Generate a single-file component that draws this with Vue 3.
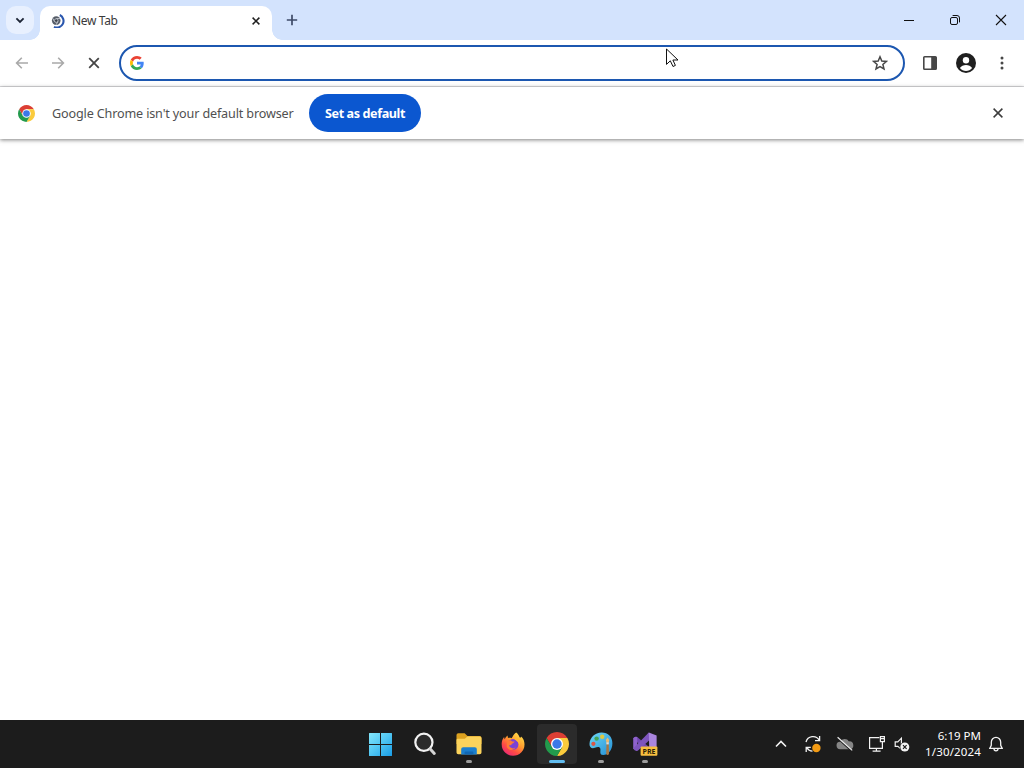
<template>
  <div class="desktop">
    <!-- shared chrome logo -->
    <svg class="defs" width="0" height="0">
      <symbol id="chrome-logo" viewBox="-22 -22 44 44">
        <path fill="#dc3f34" d="M-19.05 -11A22 22 0 0 1 19.05 -11L0 -11L-9.53 5.5Z" />
        <path fill="#fbcb3c" d="M19.05 -11A22 22 0 0 1 0 22L9.53 5.5L0 -11Z" />
        <path fill="#229a4c" d="M0 22A22 22 0 0 1 -19.05 -11L-9.53 5.5L9.53 5.5Z" />
        <circle r="11" fill="#fff" />
        <circle r="8.6" fill="#3b78e7" />
      </symbol>
    </svg>

    <!-- tab strip -->
    <header class="tabstrip">
      <button class="tab-search">
        <svg width="10" height="7" viewBox="0 0 10 7"><path d="M1.4 1.3L5 4.9L8.6 1.3" fill="none" stroke="#1c2434" stroke-width="1.8" /></svg>
      </button>
      <div class="tab">
        <svg class="favicon" width="14" height="14" viewBox="0 0 14 14">
          <circle cx="5.2" cy="6.6" r="4.3" fill="#565d68" />
          <path d="M5.2 4.6H9.1M3.5 7.5L1.6 4.2M6.9 7.5L5 10.9" stroke="#d5d9e0" stroke-width=".8" />
          <circle cx="5.2" cy="6.6" r="1.8" fill="#3c424c" stroke="#dde0e5" stroke-width=".7" />
          <path d="M8.8 1A6.2 6.2 0 0 1 3 12.9" fill="none" stroke="#2a57ae" stroke-width="2.1" />
        </svg>
        <span class="tab-title">New Tab</span>
        <svg class="tab-close" width="8" height="8" viewBox="0 0 8 8"><path d="M.6 .6L7.4 7.4M7.4 .6L.6 7.4" stroke="#1f1f1f" stroke-width="1.5" /></svg>
      </div>
      <button class="new-tab">
        <svg width="12" height="12" viewBox="0 0 12 12"><path d="M6 .8V11.2M.8 6H11.2" stroke="#3e4b68" stroke-width="1.7" /></svg>
      </button>
      <div class="window-buttons">
        <span class="win-btn"><svg width="10" height="10" viewBox="0 0 10 10"><path d="M0 5.5H10" stroke="#111" /></svg></span>
        <span class="win-btn">
          <svg width="10" height="10" viewBox="0 0 10 10" fill="none" stroke="#111">
            <rect x=".5" y="2.5" width="7" height="7" rx="1.5" />
            <path d="M2.6 .5H7Q9.5 .5 9.5 3V7.4" />
          </svg>
        </span>
        <span class="win-btn"><svg width="12" height="12" viewBox="0 0 12 12"><path d="M1 1L11 11M11 1L1 11" stroke="#111" stroke-width="1.1" /></svg></span>
      </div>
    </header>

    <!-- toolbar -->
    <nav class="toolbar">
      <span class="nav-btn">
        <svg width="14" height="12" viewBox="0 0 14 12" fill="none" stroke="#a9a9a9" stroke-width="1.6"><path d="M13 6H2M6.8 .8L1.6 6L6.8 11.2" /></svg>
      </span>
      <span class="nav-btn">
        <svg width="14" height="12" viewBox="0 0 14 12" fill="none" stroke="#a9a9a9" stroke-width="1.6"><path d="M1 6H12M7.2 .8L12.4 6L7.2 11.2" /></svg>
      </span>
      <span class="nav-btn">
        <svg width="12" height="12" viewBox="0 0 12 12"><path d="M1.2 1.2L10.8 10.8M10.8 1.2L1.2 10.8" stroke="#454545" stroke-width="1.8" /></svg>
      </span>
      <div class="omnibox">
        <svg width="14" height="14" viewBox="0 0 48 48">
          <path fill="#ea4335" d="M24 9.5c3.54 0 6.71 1.22 9.21 3.6l6.85-6.85C35.9 2.38 30.47 0 24 0 14.62 0 6.51 5.38 2.56 13.22l7.98 6.19C12.43 13.72 17.74 9.5 24 9.5z" />
          <path fill="#4285f4" d="M46.98 24.55c0-1.57-.15-3.09-.38-4.55H24v9.02h12.94c-.58 2.96-2.26 5.48-4.78 7.18l7.73 6c4.51-4.18 7.09-10.36 7.09-17.65z" />
          <path fill="#fbbc05" d="M10.53 28.59c-.48-1.45-.76-2.99-.76-4.59s.27-3.14.76-4.59l-7.98-6.19C.92 16.46 0 20.12 0 24c0 3.88.92 7.54 2.56 10.78l7.97-6.19z" />
          <path fill="#34a853" d="M24 48c6.48 0 11.93-2.13 15.89-5.81l-7.73-6c-2.15 1.45-4.92 2.3-8.16 2.3-6.26 0-11.57-4.22-13.47-9.91l-7.98 6.19C6.51 42.62 14.62 48 24 48z" />
        </svg>
        <svg class="star" width="16" height="16" viewBox="0 0 16 16">
          <path d="M8 1.8L9.8 6L14.4 6.4L10.9 9.4L12 13.9L8 11.5L4 13.9L5.1 9.4L1.6 6.4L6.2 6Z" fill="none" stroke="#474747" stroke-width="1.5" />
        </svg>
      </div>
      <span class="tool-btn">
        <svg width="14" height="14" viewBox="0 0 14 14">
          <rect x=".8" y=".8" width="12.4" height="12.4" rx=".8" fill="none" stroke="#474747" stroke-width="1.6" />
          <path d="M8.2 1H13V13H8.2Z" fill="#474747" />
        </svg>
      </span>
      <span class="tool-btn">
        <svg width="20" height="20" viewBox="0 0 20 20">
          <circle cx="10" cy="10" r="10" fill="#1f1f1f" />
          <circle cx="10" cy="7.2" r="3.2" fill="#fff" />
          <path d="M3.9 15C5.2 12.7 7.5 11.9 10 11.9S14.8 12.7 16.1 15C14.6 16.9 12.4 17.9 10 17.9S5.4 16.9 3.9 15Z" fill="#fff" />
        </svg>
      </span>
      <span class="tool-btn">
        <svg width="4" height="14" viewBox="0 0 4 14" fill="#474747"><circle cx="2" cy="2" r="1.5" /><circle cx="2" cy="7" r="1.5" /><circle cx="2" cy="12" r="1.5" /></svg>
      </span>
    </nav>

    <!-- default browser prompt -->
    <section class="infobar">
      <svg width="17" height="17"><use href="#chrome-logo" /></svg>
      <span class="info-text">Google Chrome isn't your default browser</span>
      <button class="set-default">Set as default</button>
      <svg class="info-close" width="10" height="10" viewBox="0 0 10 10"><path d="M.6 .6L9.4 9.4M9.4 .6L.6 9.4" stroke="#3c3c3c" stroke-width="1.5" /></svg>
    </section>

    <main class="page"></main>

    <!-- taskbar -->
    <footer class="taskbar">
      <div class="pinned">
        <div v-for="app in apps" :key="app.id" class="app" :class="{ active: app.active, running: app.running }">
          <svg v-if="app.id === 'start'" width="24" height="24" viewBox="0 0 24 24">
            <defs>
              <linearGradient id="win" gradientUnits="userSpaceOnUse" x1="0" y1="0" x2="24" y2="24">
                <stop offset="0" stop-color="#86e8fb" /><stop offset=".5" stop-color="#4fc5f2" /><stop offset="1" stop-color="#179be6" />
              </linearGradient>
            </defs>
            <path fill="url(#win)" d="M0 1.5Q0 1 .5 1H11V12H0ZM12 1H22.5Q23 1 23 1.5V12H12ZM0 13H11V24H.5Q0 24 0 23.5ZM12 13H23V23.5Q23 24 22.5 24H12Z" />
          </svg>
          <svg v-else-if="app.id === 'search'" width="24" height="24" viewBox="0 0 24 24">
            <circle cx="10.9" cy="10.3" r="8.6" fill="#2b2b2b" stroke="#f2f2f2" stroke-width="2.2" />
            <path d="M17.2 17L21.3 21.4" stroke="#d4d4d4" stroke-width="3" stroke-linecap="round" />
          </svg>
          <svg v-else-if="app.id === 'files'" width="26" height="24" viewBox="0 0 26 24">
            <path d="M.5 3Q.5 1.2 2.3 1.2H8.6L11.5 4H23.5Q25.5 4 25.5 6V12H.5Z" fill="#dca11f" />
            <path d="M.5 8Q.5 6.8 2 6.8H8.8L11.4 4.6H24Q25.5 4.6 25.5 6.4V20.5Q25.5 22.3 23.7 22.3H2.3Q.5 22.3 .5 20.5Z" fill="#fbd35c" />
            <path d="M5.2 22.6V17Q5.2 15.2 7.2 15.2H18.8Q20.8 15.2 20.8 17V22.6Z" fill="#1b7fce" />
            <path d="M8.6 22.6V20.6Q8.6 19.4 9.8 19.4H16.2Q17.4 19.4 17.4 20.6V22.6Z" fill="#1167b3" />
          </svg>
          <svg v-else-if="app.id === 'firefox'" width="24" height="24" viewBox="0 0 24 24">
            <defs>
              <linearGradient id="fox" x1=".85" y1=".05" x2=".2" y2="1">
                <stop offset="0" stop-color="#ffe14a" /><stop offset=".4" stop-color="#ff9b2e" /><stop offset=".7" stop-color="#ff4b45" /><stop offset="1" stop-color="#e5247c" />
              </linearGradient>
            </defs>
            <path fill="url(#fox)" d="M15.2 .4C17 1.8 18 3.6 18.5 5.2C20 5.9 20.3 5 20.3 4.4C22.5 6.6 23.6 9.5 23.5 12.6A11.4 11.2 0 0 1 .7 12.6C.5 9.5 1.5 6.9 3.1 4.9L3.6 7.3C4.2 6.6 4.4 5.1 6.5 3.4L7 6.1C8.4 5.6 9.5 5.7 10.5 6.2C12 4.8 12.2 2 15.2 .4Z" />
            <circle cx="12" cy="12.4" r="5.4" fill="#7a42d3" />
            <path d="M6.2 9.2C8 7.5 10 8.2 11.2 9.4H13.6C13.4 10.8 11.6 10.9 10.8 12.1C10.6 13.6 9 13.2 8 13.6C9.2 16.3 12.4 17.4 14.8 15.3C11.8 19.8 6.6 18.2 5.6 14.2Z" fill="#ff7a35" />
            <path d="M15.2 5.4C18.2 7 19.9 10.4 18.7 14.3C18.5 10 15 9.4 13.2 6.6Z" fill="#ffb736" />
          </svg>
          <svg v-else-if="app.id === 'chrome'" width="24" height="24"><use href="#chrome-logo" /></svg>
          <svg v-else-if="app.id === 'paint'" width="24" height="24" viewBox="0 0 24 24">
            <defs>
              <linearGradient id="palette" x1="0" y1="0" x2="1" y2="1"><stop offset="0" stop-color="#6ed7f6" /><stop offset="1" stop-color="#238fd5" /></linearGradient>
            </defs>
            <path fill="url(#palette)" d="M12.6 .6C19.2 .6 23.4 5.2 23.4 11.2C23.4 18 19 23 14.2 23C10.2 23 11.7 19.5 11.4 17C10.9 14.2 8 15 6 15.8C2.6 17 .4 15.3 .5 12C.9 5.7 6 .6 12.6 .6Z" />
            <circle cx="4.4" cy="11.8" r="2.1" fill="#d95748" />
            <circle cx="7.6" cy="6.6" r="2.2" fill="#43a556" />
            <circle cx="13.2" cy="4.8" r="2.2" fill="#dcc843" />
            <path d="M17.2 9.5Q16.4 7.4 18.5 5.4Q20.6 7.4 19.9 9.5L19.4 12H17.7Z" fill="#e8b86e" />
            <path d="M17.5 11.2H19.7L20 22Q18.6 24 17.2 22Z" fill="#a97843" />
            <path d="M17.4 10.4H19.8V12.4H17.4Z" fill="#d7dce1" />
          </svg>
          <svg v-else width="26" height="26" viewBox="0 0 26 26">
            <path d="M1.2 7.2Q2.8 5 5.2 6L20 18.4V24L17 23Z" fill="#7148b2" />
            <path d="M1.2 7.2Q2.8 5 5.2 6V18.6L1.2 18Z" fill="#8e62cb" />
            <path d="M1.2 17.6L16.8 1.4L20.4 6.6L6 19.4Q3.2 21 1.2 17.6Z" fill="#7e55bd" />
            <path d="M16.8 1.4L24.6 4.6V21L17.4 24Z" fill="#a985de" />
            <rect x="8.6" y="15.4" width="16.8" height="9.4" rx="1" fill="#f8be3f" />
            <text x="17" y="22.8" text-anchor="middle" class="pre">PRE</text>
          </svg>
        </div>
      </div>

      <div class="tray">
        <span class="tray-item"><svg width="12" height="8" viewBox="0 0 12 8"><path d="M1 6.5L6 1.5L11 6.5" fill="none" stroke="#f2f2f2" stroke-width="1.6" /></svg></span>
        <span class="tray-item">
          <svg width="18" height="18" viewBox="0 0 18 18" fill="none" stroke="#f2f2f2" stroke-width="1.3">
            <path d="M2 7A7.2 7.2 0 0 1 15.2 5.2M15.6 1V5.6H11M8.5 16.2A7 7 0 0 1 2.8 12.6M2.2 17V12.4H6.8" />
            <circle cx="12.4" cy="13" r="4.2" fill="#f39b14" stroke="none" />
          </svg>
        </span>
        <span class="tray-item">
          <svg width="18" height="16" viewBox="0 0 18 16">
            <path d="M4.5 13.2A3.7 3.7 0 0 1 4 5.8A5.2 5.2 0 0 1 13 5.4A3.9 3.9 0 0 1 13.8 13.2Z" fill="#858585" />
            <path d="M1.4 2.4L15.4 15" stroke="#1c1c1c" stroke-width="1.2" />
            <path d="M1.6 1.2L16.2 14.4" stroke="#ededed" stroke-width="1.2" />
          </svg>
        </span>
        <span class="tray-item">
          <svg width="18" height="18" viewBox="0 0 18 18" fill="none" stroke="#f2f2f2" stroke-width="1.2">
            <path d="M11.4 2.6H1.6V13.4H14.4V8.4M4.6 16.2H12.6M8.4 13.4V16.2" />
            <path d="M12.4 1.6H16.4V6.6H12.4ZM12.4 3.6H16.4M14.4 6.6V9" />
          </svg>
        </span>
        <span class="tray-item sound">
          <svg width="16" height="16" viewBox="0 0 16 16">
            <path d="M1.2 5.8H3.8L7.4 2.2V13.2L3.8 10.4H1.2Z" fill="none" stroke="#f2f2f2" stroke-width="1.2" />
            <circle cx="10.8" cy="11" r="5.1" fill="#1c1c1c" />
            <circle cx="10.8" cy="11" r="4.5" fill="#f2f2f2" />
            <path d="M9 9.2L12.6 12.8M12.6 9.2L9 12.8" stroke="#1c1c1c" stroke-width="1.2" />
          </svg>
        </span>
        <div class="clock">
          <span class="time">6:19 PM</span>
          <span class="date">1/30/2024</span>
        </div>
        <svg class="bell" width="14" height="16" viewBox="0 0 14 16" fill="none" stroke="#f2f2f2" stroke-width="1.3">
          <path d="M.8 12.4L2.3 9.4V6.2A4.7 4.9 0 0 1 11.7 6.2V9.4L13.2 12.4ZM5 12.8A2 2 0 0 0 9 12.8" />
        </svg>
      </div>
    </footer>

    <!-- mouse pointer -->
    <svg class="pointer" width="13" height="20" viewBox="0 0 13 20">
      <path d="M.5 1V16.4L4.3 12.8L7 18.5L9.4 17.4L6.9 12H12Z" fill="#fff" stroke="#111" />
    </svg>
  </div>
</template>

<script setup>
const apps = [
  { id: 'start' },
  { id: 'search' },
  { id: 'files', running: true },
  { id: 'firefox' },
  { id: 'chrome', running: true, active: true },
  { id: 'paint', running: true },
  { id: 'visualstudio', running: true },
]
</script>

<style>
body {
  margin: 0;
  overflow: hidden;
}
</style>

<style scoped>
.desktop {
  width: 1024px;
  height: 768px;
  display: flex;
  flex-direction: column;
  background: #fff;
  font-family: "Noto Sans", "Open Sans", sans-serif;
}
svg {
  display: block;
  flex: none;
}
.defs {
  position: absolute;
}
button {
  border: 0;
  padding: 0;
  font-family: inherit;
}

/* tab strip */
.tabstrip {
  height: 40px;
  display: flex;
  align-items: flex-start;
  background: #d3e3fd;
}
.tab-search {
  width: 28px;
  height: 28px;
  margin: 6px 6px 0;
  border-radius: 10px;
  background: #e8f0fe;
  display: flex;
  align-items: center;
  justify-content: center;
}
.tab {
  position: relative;
  box-sizing: border-box;
  width: 232px;
  height: 34px;
  margin-top: 6px;
  padding: 0 12px 5px 11px;
  display: flex;
  align-items: center;
  background: #fff;
  border-radius: 10px 10px 0 0;
}
/* inverted corners at the foot of the tab */
.tab::before,
.tab::after {
  content: '';
  position: absolute;
  bottom: 0;
  width: 10px;
  height: 10px;
}
.tab::before {
  left: -10px;
  background: radial-gradient(circle at 0 0, transparent 9.5px, #fff 10px);
}
.tab::after {
  right: -10px;
  background: radial-gradient(circle at 100% 0, transparent 9.5px, #fff 10px);
}
.tab-title {
  margin-left: 7px;
  font-size: 12px;
  color: #3a3a3a;
  letter-spacing: -0.35px;
}
.tab-close {
  margin-left: auto;
}
.new-tab {
  width: 28px;
  height: 28px;
  margin: 6px 0 0 6px;
  background: none;
  display: flex;
  align-items: center;
  justify-content: center;
}
.window-buttons {
  display: flex;
  margin-left: auto;
}
.win-btn {
  width: 46px;
  height: 40px;
  display: flex;
  align-items: center;
  justify-content: center;
}

/* toolbar */
.toolbar {
  box-sizing: border-box;
  height: 47px;
  padding: 0 4px;
  display: flex;
  align-items: center;
  border-bottom: 1px solid #dcdcdf;
}
.nav-btn,
.tool-btn {
  width: 36px;
  height: 36px;
  display: flex;
  align-items: center;
  justify-content: center;
}
.omnibox {
  box-sizing: border-box;
  width: 786px;
  height: 36px;
  margin: 0 7px;
  padding: 0 15px 0 9px;
  display: flex;
  align-items: center;
  border: 2px solid #1c57b0;
  border-radius: 18px;
}
.star {
  margin-left: auto;
}

/* infobar */
.infobar {
  height: 52px;
  padding: 0 21px 0 18px;
  display: flex;
  align-items: center;
  background: #fff;
  box-shadow: 0 1px 4px rgba(0, 0, 0, 0.5);
}
.info-text {
  width: 241px;
  margin-left: 17px;
  font-size: 12.6px;
  letter-spacing: -0.15px;
  color: #505050;
  white-space: nowrap;
}
.set-default {
  width: 112px;
  height: 38px;
  margin-left: 16px;
  border-radius: 19px;
  background: #0b57d0;
  color: #fff;
  font-size: 12.6px;
  font-weight: 700;
  letter-spacing: -0.4px;
}
.info-close {
  margin-left: auto;
}
.page {
  flex: 1;
}

/* taskbar */
.taskbar {
  height: 48px;
  display: flex;
  align-items: center;
  background: #1c1c1c;
}
.pinned {
  display: flex;
  gap: 4px;
  margin-left: 361px;
}
.app {
  position: relative;
  width: 40px;
  height: 40px;
  display: flex;
  align-items: center;
  justify-content: center;
  border-radius: 4px;
}
.app.active {
  background: #2b2b2b;
}
.app.running::after {
  content: '';
  position: absolute;
  left: 17px;
  bottom: 1px;
  width: 6px;
  height: 3px;
  border-radius: 2px;
  background: #9d9d9d;
}
.app.active::after {
  left: 12px;
  width: 16px;
  background: #62bdf0;
}
.pre {
  font: 700 7px "Open Sans", sans-serif;
  fill: #2b1d05;
}
.tray {
  display: flex;
  align-items: center;
  margin-left: auto;
  padding-right: 21px;
  color: #fff;
}
.tray-item {
  width: 32px;
  height: 40px;
  display: flex;
  align-items: center;
  justify-content: center;
}
.tray-item.sound {
  width: 18px;
}
.clock {
  width: 70px;
  display: flex;
  flex-direction: column;
  align-items: flex-end;
  font-size: 11.5px;
  line-height: 16px;
  white-space: nowrap;
}
.date {
  letter-spacing: 0.15px;
}
.bell {
  margin-left: 8px;
}

.pointer {
  position: absolute;
  left: 666px;
  top: 48px;
}
</style>
